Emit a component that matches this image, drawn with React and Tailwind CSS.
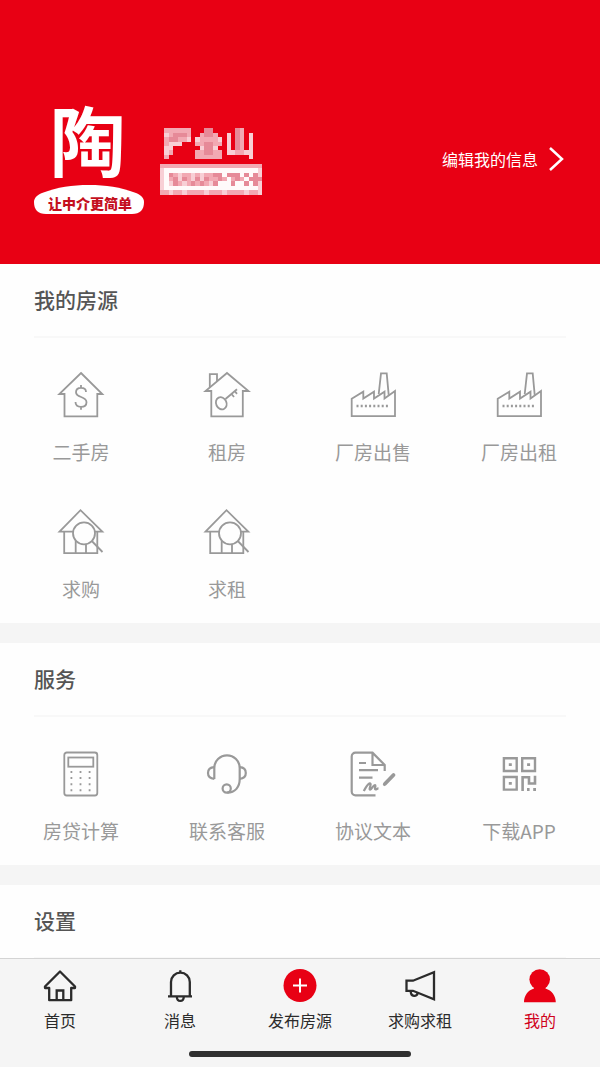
const RED = "#e80014";

// Pixelated name and tag, one character per block
const MOSAIC_ROWS = [
  ".cccccc...dd.....dc....",
  ".bcdddc..cddc..b.dc.b..",
  ".cddccb.bccccb.b.dc.b..",
  ".cbbb...ccddcc.b.dc.b..",
  ".bb......bddb..b.dc.b..",
  ".bc.....ccddcc.bbccbb..",
  ".c......cccccc......b..",
  ".......................",
  "ccccccccccccccccccccccc",
  "baaaaaaaaaaaaaaaaaaaaab",
  "badcbccbcbccddadddadadb",
  "bacdbdcbdbdccdcacdcadddb",
  "babdcbcdcdcbdaaadaadadb",
  "baaaaaaaaaaaaaaaaaaaaab",
  "ccbccbccccbcccbccccbccb",
];

const MOSAIC_COLORS = {
  a: "#fffafa",
  b: "#f8cfd5",
  c: "#f2a9b3",
  d: "#e68a98",
};

function Mosaic() {
  return (
    <svg viewBox="0 0 23 15" className="h-[67px] w-[102px]" shapeRendering="crispEdges" aria-hidden="true">
      {MOSAIC_ROWS.map((row, y) =>
        row.split("").map((cell, x) =>
          cell === "." ? null : (
            <rect key={`${x}-${y}`} x={x} y={y} width="1" height="1" fill={MOSAIC_COLORS[cell]} />
          )
        )
      )}
    </svg>
  );
}

function Logo() {
  return (
    <svg viewBox="0 0 110 108" className="h-[108px] w-[110px] shrink-0 overflow-visible" role="img" aria-label="陶">
      <text x="54" y="64" textAnchor="middle" fontSize="76" fontWeight="700" fill="#fff">
        陶
      </text>
      <path d="M8 86C24 80 38 78 55 78s31 2 47 8c5 2 8 5 8 9 0 8-4 12-12 12H12C4 107 0 103 0 95c0-4 3-7 8-9z" fill="#fff" />
      <text x="56" y="102" textAnchor="middle" fontSize="14" fontWeight="900" fill="#c4101e">
        让中介更简单
      </text>
    </svg>
  );
}

function GridIcon({ children }) {
  return (
    <svg viewBox="0 0 48 48" className="size-12" fill="none" stroke="#999" strokeWidth="1.8" aria-hidden="true">
      {children}
    </svg>
  );
}

function SaleHouseIcon() {
  return (
    <GridIcon>
      <path d="M24 2 45.3 23H40.3V45.3H7.5V23H2.3z" />
      <path d="M29 21c0-2.6-2-4.2-5-4.2s-5 1.6-5 4.4c0 6 10.5 3.6 10.5 10 0 3-2.3 4.6-5.5 4.6s-5.5-1.7-5.5-4.8M24 14v2.8M24 35.8v3" />
    </GridIcon>
  );
}

function RentHouseIcon() {
  return (
    <GridIcon>
      <path d="M24 2 45.5 20H39.8V45.3H8.3V20H2.5z" />
      <path d="M6.8 16V3.2H14V10" />
      <ellipse cx="18.3" cy="32.3" rx="5.2" ry="6.3" transform="rotate(-25 18.3 32.3)" />
      <path d="M22.5 28 34 18.2M28.5 23l2.5 3M31.8 20.2l2.2 2.6" />
    </GridIcon>
  );
}

function FactoryIcon() {
  return (
    <GridIcon>
      <path d="M2.7 45.2V27.7L14.3 20.7V27.5L25 20.7V27.5L35.5 20.7V27.5L46 20V45.2z" />
      <path d="M29.7 23 32 2.4H37.7L39.7 23.8" />
      <path d="M7.5 35H39" strokeWidth="2.5" strokeDasharray="2 2.2" />
    </GridIcon>
  );
}

function WantedIcon() {
  return (
    <GridIcon>
      <path d="M17 23.7H2.5L23.5 2.2 45.3 23.7H38M7.2 23.7V45.2H40.3V23.7M18.7 32.5V45M29 36.5V45" />
      <circle cx="27" cy="25.3" r="11" />
      <path d="M34.8 33 45.5 44" />
    </GridIcon>
  );
}

function CalculatorIcon() {
  return (
    <GridIcon>
      <rect x="7.3" y="2.5" width="33" height="43" rx="2.5" />
      <rect x="11.3" y="7.5" width="25" height="9.2" />
      <path d="M13.5 22H36M13.5 28H36M13.5 34.2H36M13.5 40.3H36" strokeWidth="2" strokeDasharray="1.8 7.3" />
    </GridIcon>
  );
}

function HeadsetIcon() {
  return (
    <GridIcon>
      <g strokeWidth="2.2">
        <path d="M11.3 29V18a12.7 12.7 0 0 1 25.4 0V29c0 8-4.5 13.7-12.5 13.7" />
        <path d="M11.3 17.2C7 17.5 5 20 5 23s2 5.5 6.3 5.8M36.7 17.2C41 17.5 42.8 20 42.8 23s-1.8 5.5-6.1 5.8" />
        <circle cx="23.7" cy="38.5" r="4.1" />
      </g>
    </GridIcon>
  );
}

function AgreementIcon() {
  return (
    <GridIcon>
      <g strokeWidth="2.2">
        <path d="M26.5 45.3H6.5a3.8 3.8 0 0 1-3.8-3.8V6.5a3.8 3.8 0 0 1 3.8-3.8H23.5L35.7 15V21M23.5 2.7V15H35.7" />
        <path d="M10 13H17M10 20.2H29M10 27.7H23.5" />
        <path d="M14.7 41c2-3 3.5-7 6.2-7.6 2.2 0-1.5 6.2.2 6.2 1.7-.3 3-4.5 4.8-4.5 1.5.3-1 4.3.6 4.3 1.2 0 1.5-1 3-1" />
        <path d="M34.5 35.5 36 33.8" />
        <path d="M36 33.8 44.5 25" strokeWidth="3.8" strokeLinecap="round" />
      </g>
    </GridIcon>
  );
}

function QrIcon() {
  return (
    <GridIcon>
      <g strokeWidth="2.4">
        <path d="M8.9 8.2h12.8v12.8H8.9zM27.2 8.2h12.8v12.8H27.2zM8.9 27h12.8V39.6H8.9z" />
        <path d="M27.6 41V27.2H34V33.5H40V25.8" strokeWidth="2.6" />
        <path d="M13.8 14.6h3M32.1 14.6h3M13.8 33.3h3M32 39.5h2.6M38.2 39.5h2.8" strokeWidth="2.8" />
      </g>
    </GridIcon>
  );
}

function TabIcon({ children }) {
  return (
    <svg viewBox="0 0 36 36" className="size-9" fill="none" stroke="#2b2b2b" strokeWidth="2.3" aria-hidden="true">
      {children}
    </svg>
  );
}

function HomeIcon() {
  return (
    <TabIcon>
      <path d="M18 3.5 33 18.5V20H29.2V32.2H7.2V20H3V18.5z" strokeLinejoin="round" />
      <path d="M14.7 32V22.5H21.3V32" />
    </TabIcon>
  );
}

function BellIcon() {
  return (
    <TabIcon>
      <path d="M9 28.3V14a9.4 9.4 0 0 1 18.8 0V28.3M6 28.3H30M18.3 2.3V5M14.8 29c.3 5.2 6.7 5.2 7 0" />
    </TabIcon>
  );
}

function PublishIcon() {
  return (
    <TabIcon>
      <circle cx="18" cy="17.5" r="16.5" fill={RED} stroke="none" />
      <path d="M18 10.5v14M11 17.5h14" stroke="#fff" strokeWidth="2" />
    </TabIcon>
  );
}

function MegaphoneIcon() {
  return (
    <TabIcon>
      <path d="M4.5 12.7H11L32 4.2V31.2L11 22.8H4.5z" />
      <path d="M8.8 23c-.5 6.2 7 6.2 6.8 1.5" />
    </TabIcon>
  );
}

function PersonIcon() {
  return (
    <TabIcon>
      <g fill={RED} stroke="none">
        <circle cx="17.7" cy="11.5" r="10.3" />
        <path d="M12 18H23.5V20.5C30 22.5 33.8 28 33.8 34.3H2C2 28 5.5 22.5 12 20.5z" />
      </g>
    </TabIcon>
  );
}

const houseItems = [
  { label: "二手房", icon: SaleHouseIcon },
  { label: "租房", icon: RentHouseIcon },
  { label: "厂房出售", icon: FactoryIcon },
  { label: "厂房出租", icon: FactoryIcon },
  { label: "求购", icon: WantedIcon },
  { label: "求租", icon: WantedIcon },
];

const serviceItems = [
  { label: "房贷计算", icon: CalculatorIcon },
  { label: "联系客服", icon: HeadsetIcon },
  { label: "协议文本", icon: AgreementIcon },
  { label: "下载APP", icon: QrIcon },
];

const tabs = [
  { label: "首页", icon: HomeIcon },
  { label: "消息", icon: BellIcon },
  { label: "发布房源", icon: PublishIcon },
  { label: "求购求租", icon: MegaphoneIcon },
  { label: "我的", icon: PersonIcon, active: true },
];

function Section({ title, items }) {
  return (
    <section className="bg-[#fefefe]">
      <div className="px-[34px]">
        <h2 className="border-b-2 border-[#f8f8f8] pt-5 pb-[22px] text-[21px] leading-[30px] font-medium text-[#555]">
          {title}
        </h2>
      </div>
      {items && (
        <div className="grid grid-cols-4 gap-y-[42px] px-2 pt-[33px] pb-5">
          {items.map(({ label, icon: Icon }) => (
            <button key={label} type="button" className="flex flex-col items-center gap-[19px]">
              <Icon />
              <span className="text-[19px] leading-7 text-[#999]">{label}</span>
            </button>
          ))}
        </div>
      )}
    </section>
  );
}

export default function App() {
  return (
    <div className="flex h-screen flex-col bg-[#f5f5f5] font-['Noto_Sans_CJK_SC',sans-serif]">
      <main className="flex min-h-0 flex-1 flex-col gap-5 overflow-y-auto [scrollbar-width:none]">
        <div>
          <header className="flex items-center bg-[#e80014] px-[34px] pt-[107px] pb-[49px]">
            <Logo />
            <div className="ml-4">
              <Mosaic />
            </div>
            <a href="#profile" className="mb-1 ml-auto flex items-center gap-2 text-[16px] text-white">
              编辑我的信息
              <svg viewBox="0 0 20 26" className="h-[26px] w-5" fill="none" stroke="#fff" strokeWidth="2.5" aria-hidden="true">
                <path d="M4 2 16 13 4 24" />
              </svg>
            </a>
          </header>
          <Section title="我的房源" items={houseItems} />
        </div>
        <Section title="服务" items={serviceItems} />
        <Section title="设置" />
      </main>

      <nav className="border-t border-[#d4d4d4] bg-[#f5f5f5] pt-[9px] pb-[10px]">
        <div className="grid grid-cols-5">
          {tabs.map(({ label, icon: Icon, active }) => (
            <a
              key={label}
              href={`#${label}`}
              aria-current={active ? "page" : undefined}
              className={`flex flex-col items-center gap-1 text-[16px] leading-6 ${active ? "text-[#d0021b]" : "text-[#2b2b2b]"}`}
            >
              <Icon />
              {label}
            </a>
          ))}
        </div>
        <div className="mx-auto mt-[19px] h-[6px] w-[37%] rounded-full bg-[#303030]" />
      </nav>
    </div>
  );
}
